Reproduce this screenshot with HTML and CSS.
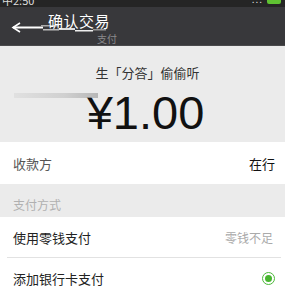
FILE: index.html
```html
<!DOCTYPE html>
<html>
<head>
<meta charset="utf-8">
<link rel="stylesheet" href="styles.css">
</head>
<body>
<div class="phone">
  <div class="statusbar">
    <span class="st-left">中2:50</span>
    <span class="st-right">
      <span class="dots">...</span>
      <span class="batt"></span>
    </span>
  </div>
  <div class="header">
    <svg class="back" width="95" height="14" viewBox="0 0 95 14">
      <path d="M9 4 L2 8.5 L9 13" stroke="#fff" stroke-width="1.6" fill="none"/>
      <rect x="2" y="7.5" width="30" height="2" fill="#fff"/>
      <rect x="30" y="6" width="18" height="1.5" fill="#aaa"/>
      <rect x="32" y="10" width="16" height="1.5" fill="#bbb"/>
      <rect x="48" y="9" width="16" height="2" fill="#ddd"/>
      <rect x="64" y="11" width="18" height="1.5" fill="#eee"/>
      <rect x="82" y="10" width="13" height="1.5" fill="#999"/>
    </svg>
    <div class="title">确认交易</div>
    <div class="subtitle">支付</div>
  </div>
  <div class="summary">
    <div class="desc">生「分答」偷偷听</div>
    <div class="amount-wrap">
      <span class="smear"></span>
      <span class="amount">¥1.00</span>
    </div>
  </div>
  <div class="row white tall">
    <span class="label">收款方</span>
    <span class="value dark">在行</span>
  </div>
  <div class="section">支付方式</div>
  <div class="list">
    <div class="row white item">
      <span class="label dark">使用零钱支付</span>
      <span class="value muted">零钱不足</span>
    </div>
    <div class="sep"></div>
    <div class="row white item">
      <span class="label dark">添加银行卡支付</span>
      <span class="radio"><span class="dot"></span></span>
    </div>
  </div>
</div>
</body>
</html>
```
FILE: styles.css
```css
* { box-sizing: border-box; }
html, body { margin: 0; padding: 0; }
body {
  width: 285px;
  height: 288px;
  overflow: hidden;
  background: #ebebeb;
  font-family: "Noto Sans CJK SC", "Noto Sans", sans-serif;
}
.phone { width: 285px; }
.statusbar {
  height: 7px;
  background: #252525;
  position: relative;
  overflow: hidden;
}
.st-left {
  position: absolute;
  left: 2px;
  top: -7px;
  color: #ddd;
  font-size: 11px;
  line-height: 14px;
}
.st-right {
  position: absolute;
  right: 4px;
  top: -6px;
  display: flex;
  gap: 4px;
  align-items: center;
}
.dots { color: #ddd; font-size: 10px; line-height: 10px; letter-spacing: 1px; }
.batt {
  width: 14px;
  height: 6px;
  margin-top: 4px;
  background: #5fc232;
  border-radius: 2px;
}
.header {
  height: 39px;
  background: #38383b;
  border-bottom: 1px solid #4a4a4c;
  position: relative;
}
.back {
  position: absolute;
  left: 11px;
  top: 12px;
}
.title {
  position: absolute;
  left: 48px;
  top: 3px;
  color: #fff;
  font-size: 15px;
  line-height: 22px;
  letter-spacing: 0.5px;
}
.subtitle {
  position: absolute;
  left: 97px;
  top: 25px;
  color: #8a8a8c;
  font-size: 10px;
  line-height: 13px;
}
.summary {
  height: 96px;
  padding-top: 18px;
  display: flex;
  flex-direction: column;
  align-items: center;
}
.desc {
  font-size: 13px;
  line-height: 17px;
  color: #333;
  margin-left: 10px;
}
.amount-wrap {
  position: relative;
  margin-top: 7px;
  width: 285px;
  display: flex;
  justify-content: center;
}
.amount {
  font-family: "Liberation Sans", Arial, sans-serif;
  font-size: 47px;
  line-height: 50px;
  color: #111;
  margin-left: 6px;
}
.smear {
  position: absolute;
  left: 14px;
  top: 5px;
  width: 84px;
  height: 5px;
  background: linear-gradient(90deg, rgba(200,200,200,0.3), rgba(190,190,190,0.6) 60%, rgba(170,170,170,0.8));
}
.row {
  display: flex;
  justify-content: space-between;
  align-items: center;
  padding: 0 10px 0 13px;
}
.white { background: #fff; }
.tall { height: 42px; }
.item { height: 40px; }
.label { font-size: 13px; color: #555; }
.label.dark { color: #222; }
.value { font-size: 13px; }
.value.dark { color: #111; }
.value.muted { color: #aaa; font-size: 12px; padding-right: 2px; }
.section {
  height: 33px;
  padding: 13px 0 0 13px;
  font-size: 12px;
  line-height: 16px;
  color: #b0b0b0;
}
.list { background: #fff; }
.sep {
  height: 1px;
  margin-left: 7px;
  margin-right: 4px;
  background: #e2e2e2;
}
.radio {
  width: 13px;
  height: 13px;
  border-radius: 50%;
  border: 1.5px solid #4cb93a;
  display: flex;
  align-items: center;
  justify-content: center;
}
.dot {
  width: 7px;
  height: 7px;
  border-radius: 50%;
  background: #47b52f;
}
```
